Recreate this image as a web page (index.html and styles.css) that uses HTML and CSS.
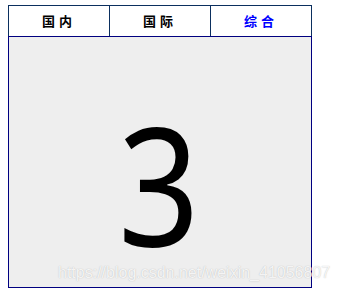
FILE: index.html
```html
<!DOCTYPE html>
<html lang="zh">
<head>
<meta charset="utf-8">
<link rel="stylesheet" href="styles.css">
</head>
<body>
<div class="tabs">
  <ul class="tab-bar">
    <li class="tab">国内</li>
    <li class="tab">国际</li>
    <li class="tab active">综合</li>
  </ul>
  <div class="panel"><span class="num">3</span></div>
</div>
<div class="watermark">https://blog.csdn.net/weixin_41056807</div>
</body>
</html>
```
FILE: styles.css
```css
html, body {
  margin: 0;
  padding: 0;
  background: #ffffff;
}
html {
  height: 294px;
  overflow: hidden;
}
body {
  padding: 5px 0 0 8px;
  position: relative;
  height: 294px;
  box-sizing: border-box;
  overflow: hidden;
}
.tabs {
  width: 304px;
}
.tab-bar {
  list-style: none;
  margin: 0;
  padding: 0;
  display: flex;
  border: 1px solid #0b2f5e;
  border-bottom: none;
}
.tab {
  width: 100px;
  height: 30px;
  line-height: 30px;
  text-align: center;
  font-family: "Noto Sans CJK SC", "Noto Sans", sans-serif;
  font-weight: bold;
  font-size: 13px;
  letter-spacing: 4px;
  color: #000000;
  border-right: 1px solid #0b2f5e;
}
.tab:last-child {
  border-right: none;
}
.tab.active {
  color: #0000ff;
}
.panel {
  height: 186px;
  padding-top: 64px;
  border: 1px solid #000080;
  background: #eeeeee;
  text-align: center;
  color: #000000;
}
.num {
  display: inline-block;
  font-family: "Noto Sans", "Open Sans", sans-serif;
  font-size: 164px;
  line-height: 164px;
  transform: scaleX(0.87);
  margin-left: -2px;
}
.watermark {
  position: absolute;
  left: 58px;
  top: 264px;
  font-family: "Liberation Sans", Arial, sans-serif;
  font-size: 16px;
  line-height: 18px;
  color: rgba(255, 255, 255, 0.85);
  text-shadow: 0 0 1px rgba(120, 120, 120, 0.5);
  white-space: nowrap;
}
```
